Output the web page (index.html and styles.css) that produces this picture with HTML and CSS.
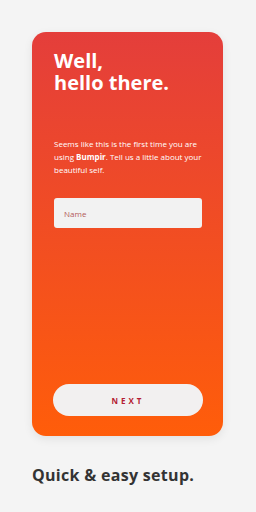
FILE: index.html
```html
<!DOCTYPE html>
<html lang="en">
<head>
  <meta charset="UTF-8">
  <meta name="viewport" content="width=device-width, initial-scale=1.0">
  <title>Bumpir - Quick &amp; easy setup</title>
  <link rel="stylesheet" href="styles.css">
</head>
<body>

  <main class="card">
    <h1 class="title">Well,<br>hello there.</h1>

    <p class="intro">Seems like this is the first time you are using <b>Bumpir</b>. Tell us a little about your beautiful self.</p>

    <input class="name-input" type="text" placeholder="Name">

    <button class="next-btn" type="button">NEXT</button>
  </main>

  <footer class="caption">Quick &amp; easy setup.</footer>

</body>
</html>
```

FILE: styles.css
```css
body {
  font-family: "Open Sans", Arial, sans-serif;
  margin: 0;
  padding: 32px 33px 0 32px;
  background-color: #f4f4f4;
}

.card {
  display: flex;
  flex-direction: column;
  height: 404px;
  box-sizing: border-box;
  padding: 18px 21px 20px 22px;
  background: linear-gradient(to bottom, #e43e3b, #ff5d0a);
  border-radius: 14px;
  box-shadow: 0 3px 10px rgba(0, 0, 0, 0.08);
}

.title {
  margin: 0;
  color: white;
  font-size: 20px;
  line-height: 22px;
  font-weight: 700;
}

.intro {
  margin: 43px 0 0;
  color: white;
  font-size: 8px;
  line-height: 13px;
}

.intro b {
  font-weight: 700;
}

.name-input {
  margin-top: 22px;
  height: 30px;
  box-sizing: border-box;
  padding: 0 10px;
  border: none;
  border-radius: 3px;
  background-color: #f2f2f2;
  font-family: inherit;
  font-size: 8px;
  outline: none;
}

.name-input::placeholder {
  color: #b25a5a;
}

.next-btn {
  margin-top: auto;
  height: 32px;
  margin-left: -1px;
  margin-right: -1px;
  border: none;
  border-radius: 16px;
  background-color: #f2f0f0;
  color: #b41c33;
  font-family: inherit;
  font-size: 8px;
  font-weight: 700;
  letter-spacing: 3px;
  cursor: pointer;
}

.caption {
  margin-top: 28px;
  color: #333;
  font-size: 16px;
  font-weight: 700;
  letter-spacing: 0.3px;
}
```
